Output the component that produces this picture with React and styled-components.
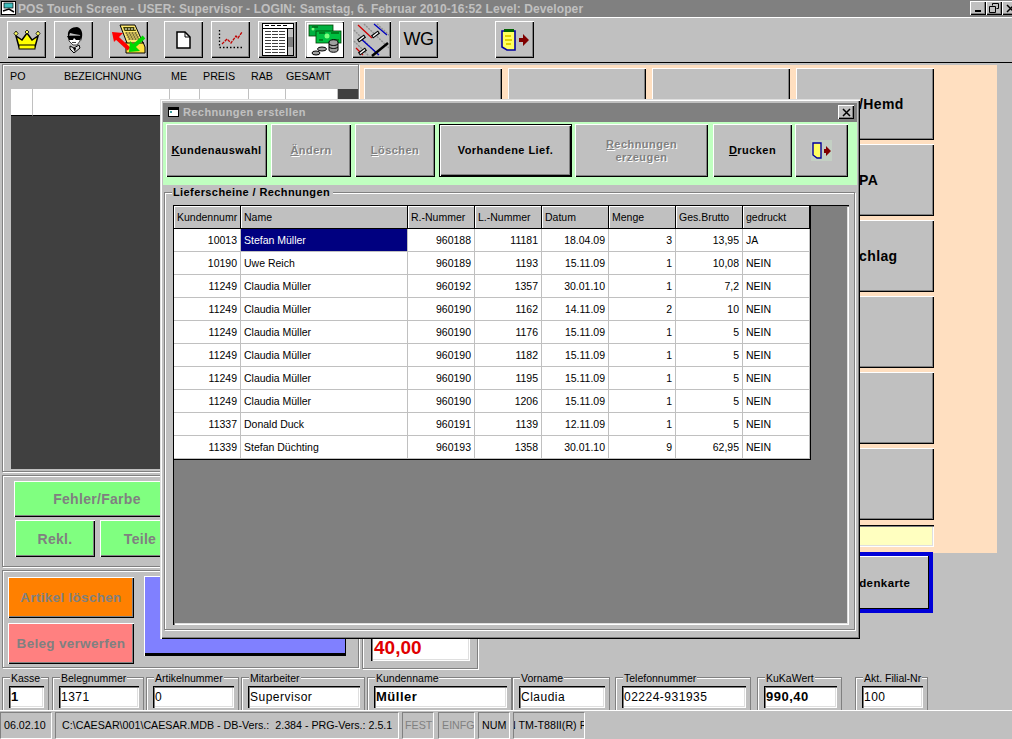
import React from "react";
import styled, { createGlobalStyle, css } from "styled-components";

const GlobalStyle = createGlobalStyle`
  html, body {
    margin: 0;
    padding: 0;
    background: #c0c0c0;
  }
  body {
    font-family: "Liberation Sans", Arial, sans-serif;
    font-size: 11px;
    color: #000;
    overflow: hidden;
  }
`;

const raised = css`
  box-shadow: inset 1px 1px 0 #fff, inset -1px -1px 0 #000, inset -2px -2px 0 #808080;
`;
const sunken = css`
  box-shadow: inset 1px 1px 0 #000, inset 2px 2px 0 #808080, inset -1px -1px 0 #fff, inset -2px -2px 0 #dfdfdf;
`;

const Screen = styled.div`
  position: relative;
  width: 1012px;
  height: 739px;
  overflow: hidden;
  display: flex;
  flex-direction: column;
  background: #c0c0c0;
`;

const TitleBar = styled.div`
  height: 17px;
  flex: none;
  display: flex;
  align-items: center;
  background: #808080;
  border-bottom: 1px solid #fff;
  color: #c0c0c0;
  font-weight: 700;
  font-size: 12px;
  letter-spacing: 0.1px;
  white-space: nowrap;
  padding-left: 18px;
`;

const AppIcon = styled.svg`
  position: absolute;
  left: 1px;
  top: 0;
`;

const WinButtons = styled.div`
  position: absolute;
  right: -6px;
  top: 1px;
  display: flex;
`;

const WinButton = styled.div`
  width: 16px;
  height: 14px;
  background: #c0c0c0;
  ${raised}
  display: flex;
  align-items: center;
  justify-content: center;
`;

const Toolbar = styled.div`
  height: 45px;
  flex: none;
  box-sizing: border-box;
  padding: 3px 0 0 7px;
  display: flex;
  border-bottom: 1px solid #000;
`;

const ToolButton = styled.div`
  width: 39px;
  height: 37px;
  flex: none;
  margin-right: ${(p) => p.$gap ?? 8}px;
  background: #c0c0c0;
  ${raised}
  display: flex;
  align-items: center;
  justify-content: center;
  font-size: 18px;
  letter-spacing: -0.5px;
`;

const Main = styled.div`
  height: 607px;
  flex: none;
  display: flex;
`;

const LeftColumn = styled.div`
  width: 360px;
  flex: none;
  padding: 1px 1px 0 2px;
  box-sizing: border-box;
  display: flex;
  flex-direction: column;
  gap: 3px;
`;

const Groove = styled.div`
  box-sizing: border-box;
  border: 1px solid #808080;
  box-shadow: inset 1px 1px 0 #fff, 1px 1px 0 #fff;
`;

const OrderPanel = styled(Groove)`
  height: 408px;
  flex: none;
`;

const OrderHead = styled.div`
  height: 22px;
  margin-bottom: 2px;
  display: flex;
  align-items: center;
  white-space: nowrap;
  font-size: 10.7px;
`;

const OrderHeadCell = styled.span`
  width: ${(p) => p.$w}px;
  flex: none;
`;

const OrderGrid = styled.div`
  margin-left: 8px;
  height: 380px;
  background: #404040;
`;

const OrderRow = styled.div`
  height: 27px;
  display: flex;
`;

const OrderCell = styled.div`
  height: 27px;
  width: ${(p) => p.$w}px;
  flex: none;
  box-sizing: border-box;
  background: #fff;
  border-right: 1px solid #c0c0c0;
  border-bottom: 1px solid #000;
`;

const ActionGroup = styled(Groove)`
  height: 92px;
  flex: none;
  padding: 5px 0 0 11px;
  display: flex;
  flex-direction: column;
  gap: 3px;
`;

const ActionRow = styled.div`
  display: flex;
  gap: 5px;
  margin-left: 1px;
`;

const ColorButton = styled.div`
  box-sizing: border-box;
  width: ${(p) => p.$w}px;
  height: ${(p) => p.$h}px;
  flex: none;
  background: ${(p) => p.$bg};
  ${raised}
  display: flex;
  align-items: center;
  justify-content: center;
  font-weight: 700;
  font-size: ${(p) => p.$size ?? 14}px;
  letter-spacing: 0.3px;
  color: #808080;
  white-space: nowrap;
`;

const FooterGroup = styled(Groove)`
  height: 98px;
  flex: none;
  padding: 6px 0 0 5px;
  display: flex;
  gap: 10px;
`;

const StackButtons = styled.div`
  display: flex;
  flex-direction: column;
  gap: 5px;
`;

const BigBlue = styled.div`
  width: 202px;
  height: 80px;
  margin-top: -1px;
  background: #8080ff;
  box-shadow: inset 1px 1px 0 #fff, inset -1px -3px 0 #000;
`;

const RightColumn = styled.div`
  flex: 1;
  padding: 2px 15px 0 0;
  display: flex;
  flex-direction: column;
`;

const PeachPanel = styled.div`
  height: 488px;
  flex: none;
  box-sizing: border-box;
  background: #ffdfc0;
  padding: 3px 63px 0 4px;
`;

const KeyGrid = styled.div`
  display: grid;
  grid-template-columns: repeat(4, 138px);
  grid-auto-rows: 72px;
  gap: 4px 6px;
`;

const Key = styled.div`
  box-sizing: border-box;
  background: #c0c0c0;
  ${raised}
  display: flex;
  align-items: center;
  font-weight: 700;
  font-size: 14px;
  letter-spacing: 0.4px;
  padding-left: 63px;
  white-space: nowrap;
`;

const YellowField = styled.div`
  height: 22px;
  margin: 5px 0 0 440px;
  background: #ffffc0;
  ${sunken}
`;

const LowerRow = styled.div`
  display: flex;
`;

const PriceGroup = styled(Groove)`
  width: 116px;
  height: 116px;
  margin-left: 2px;
  flex: none;
  display: flex;
  flex-direction: column;
  justify-content: flex-end;
  padding: 0 7px 7px 8px;
`;

const PriceField = styled.div`
  height: 26px;
  background: #fff;
  ${sunken}
  color: #e00000;
  font-weight: 700;
  font-size: 19px;
  line-height: 26px;
  padding-left: 3px;
`;

const CardButton = styled.div`
  box-sizing: border-box;
  width: 120px;
  height: 61px;
  margin: -1px 0 0 335px;
  border: 4px solid #0000d8;
  background: #c0c0c0;
  box-shadow: inset -1px -1px 0 #000, inset 1px 1px 0 #fff;
  display: flex;
  align-items: center;
  justify-content: center;
  font-weight: 700;
  font-size: 11.5px;
  letter-spacing: 0.4px;
`;

const FieldRow = styled.div`
  height: 40px;
  flex: none;
  padding-left: 2px;
  display: flex;
`;

const Field = styled.div`
  position: relative;
  box-sizing: border-box;
  width: ${(p) => p.$w}px;
  height: 33px;
  margin-left: ${(p) => p.$ml ?? 0}px;
  margin-top: 7px;
  flex: none;
  border: 1px solid #808080;
  border-bottom: 0;
  box-shadow: inset 1px 1px 0 #fff;
  padding: 8px 4px 0 6px;
`;

const Legend = styled.span`
  position: absolute;
  top: -6px;
  left: 7px;
  padding: 0 1px;
  background: #c0c0c0;
  font-size: 10.5px;
  line-height: 13px;
  white-space: nowrap;
`;

const FieldInput = styled.div`
  height: 22px;
  box-sizing: border-box;
  background: #fff;
  ${sunken}
  font-size: ${(p) => (p.$bold ? 13 : 12)}px;
  font-weight: ${(p) => (p.$bold ? 700 : 400)};
  line-height: 22px;
  padding-left: 2px;
  letter-spacing: 0.5px;
  white-space: nowrap;
  overflow: hidden;
`;

const StatusBar = styled.div`
  flex: 1;
  border-top: 1px solid #fff;
  display: flex;
  padding-top: 1px;
`;

const StatusCell = styled.div`
  box-sizing: border-box;
  width: ${(p) => p.$w}px;
  margin-right: ${(p) => p.$gap ?? 3}px;
  flex: none;
  height: 27px;
  line-height: 24px;
  padding-left: ${(p) => p.$pl ?? 3}px;
  text-indent: ${(p) => p.$indent ?? 0}px;
  border: 1px solid;
  border-color: #808080 #fff #fff #808080;
  color: ${(p) => (p.$off ? "#808080" : "#000")};
  font-size: 10.7px;
  white-space: pre;
  overflow: hidden;
`;

/* dialog window floats over the page */
const Dialog = styled.div`
  position: absolute;
  left: 160px;
  top: 99px;
  width: 700px;
  height: 540px;
  box-sizing: border-box;
  background: #c0c0c0;
  padding: 4px 3px 0;
  box-shadow: inset 1px 1px 0 #dfdfdf, inset 2px 2px 0 #fff, inset -1px -1px 0 #000, inset -2px -2px 0 #808080;
  display: flex;
  flex-direction: column;
`;

const DialogTitle = styled.div`
  height: 17px;
  padding: 0 0 2px 4px;
  flex: none;
  background: #808080;
  color: #c0c0c0;
  font-weight: 700;
  font-size: 11px;
  letter-spacing: 0.4px;
  display: flex;
  align-items: center;
  gap: 3px;
  position: relative;
`;

const DialogClose = styled(WinButton)`
  position: absolute;
  right: 3px;
  top: 2px;
`;

const CommandBar = styled.div`
  height: 63px;
  flex: none;
  box-sizing: border-box;
  background: #c0ffc0;
  padding: 2px 0 0 3px;
  display: flex;
`;

const CommandButton = styled.div`
  box-sizing: border-box;
  width: ${(p) => p.$w}px;
  margin-right: ${(p) => p.$gap ?? 4}px;
  height: 53px;
  flex: none;
  background: #c0c0c0;
  ${(p) =>
    p.$focus
      ? css`
          border: 1px solid #000;
          box-shadow: inset 1px 1px 0 #fff, inset -1px -1px 0 #000, inset -2px -2px 0 #808080;
        `
      : raised}
  display: flex;
  align-items: center;
  justify-content: center;
  text-align: center;
  font-weight: 700;
  font-size: 11px;
  line-height: 13px;
  letter-spacing: 0.45px;
  color: ${(p) => (p.$off ? "#808080" : "#000")};
  text-shadow: ${(p) => (p.$off ? "1px 1px 0 #fff" : "none")};
`;

const ListGroup = styled.div`
  position: relative;
  flex: 1;
  margin: 7px 2px 9px 1px;
  border: 1px solid #808080;
  box-shadow: inset 1px 1px 0 #fff, 1px 1px 0 #fff;
  padding: 12px 5px 4px 8px;
  display: flex;
`;

const ListLegend = styled.span`
  position: absolute;
  left: 7px;
  top: -7px;
  padding: 0 3px 0 1px;
  background: #c0c0c0;
  font-weight: 700;
  font-size: 11px;
  line-height: 13px;
  letter-spacing: 0.4px;
`;

const ListArea = styled.div`
  flex: 1;
  background: #808080;
  ${sunken}
  padding: 1px;
`;

const Table = styled.div`
  width: 636px;
  background: #fff;
  border-bottom: 1px solid #000;
  border-right: 1px solid #000;
`;

const TableRow = styled.div`
  display: grid;
  grid-template-columns: 67px 167px repeat(6, 67px);
  height: 23px;
`;

const HeadCell = styled.div`
  box-sizing: border-box;
  background: #c0c0c0;
  border-bottom: 1px solid #000;
  border-right: 1px solid #000;
  box-shadow: inset 1px 1px 0 #fff;
  line-height: 22px;
  padding-left: 3px;
  overflow: hidden;
  white-space: nowrap;
  font-size: 10.5px;
`;

const Cell = styled.div`
  box-sizing: border-box;
  border-bottom: 1px solid #c0c0c0;
  border-right: 1px solid #c0c0c0;
  line-height: 23px;
  padding: 0 3px;
  font-size: 10.5px;
  text-align: ${(p) => (p.$right ? "right" : "left")};
  white-space: nowrap;
  overflow: hidden;
  background: ${(p) => (p.$selected ? "#000080" : "#fff")};
  color: ${(p) => (p.$selected ? "#fff" : "#000")};
`;

const Underline = styled.span`
  text-decoration: underline;
`;

const CrownIcon = () => (
  <svg width="28" height="20" viewBox="0 0 28 20">
    <path d="M6 17 L3 6 L9 10 L14 3 L19 10 L25 6 L22 17 Z" fill="#ffff00" stroke="#000" strokeWidth="1.5" />
    <rect x="6" y="15" width="16" height="4" fill="#ffff00" stroke="#000" />
    <path d="M3 1 L5 3.5 L3 6 L1 3.5 Z M14 0 L16 2 L14 4 L12 2 Z M25 1 L27 3.5 L25 6 L23 3.5 Z" fill="#ffff60" stroke="#000" strokeWidth="0.8" />
  </svg>
);

const AgentIcon = () => (
  <svg width="18" height="26" viewBox="0 0 18 26">
    <path d="M4 9 H15 V14 L12 18 H8 L4 14 Z" fill="#fff" stroke="#404040" />
    <path d="M3 9 C2 3 7 0 12 0 C16 1 18 5 17 10 L16 14 L15 8 L9 7 L5 6 L4 9 Z" fill="#000" />
    <path d="M2 9 H16 V11 L15 13 H11 L9 11 L8 13 H4 L3 11 Z" fill="#000" />
    <path d="M7 15.5 H11" stroke="#404040" />
    <path d="M5 19 L9 21 L14 18 L15 21 L9 26 L5 22 Z" fill="#e0e0e0" stroke="#000" />
    <path d="M8 21 H11 L10 25 Z" fill="#000" />
  </svg>
);

const RegisterIcon = () => (
  <svg width="34" height="31" viewBox="0 0 34 31">
    <path d="M14 18 H31 L33 23 V29 H14 Z" fill="#ffe040" stroke="#000" />
    <path d="M8 1 H23 L31 19 H15 Z" fill="#ffe870" stroke="#000" />
    <path d="M11 3 H22 L24 7 H12.5 Z" fill="#404000" />
    <path d="M13 5 H23" stroke="#fff" strokeDasharray="2 1" />
    <path d="M13.5 9 H25 M14.5 11 H26 M15.5 13 H27 M16.5 15 H28" stroke="#000" strokeDasharray="2 1" />
    <path d="M17 25 L5 14" stroke="#ff0000" strokeWidth="4" />
    <path d="M0 8 L11 9 L2 18 Z" fill="#ff0000" />
    <path d="M32 13 L22 22" stroke="#00d800" strokeWidth="4" />
    <path d="M17 28 L28 27 L18 17 Z" fill="#00d800" />
  </svg>
);

const DocIcon = () => (
  <svg width="15" height="18" viewBox="0 0 15 18">
    <path d="M1 1 H9 L14 6 V17 H1 Z" fill="#fff" stroke="#000" strokeWidth="1.5" />
    <path d="M9 1 V6 H14" fill="none" stroke="#000" />
  </svg>
);

const ChartIcon = () => (
  <svg width="25" height="19" viewBox="0 0 25 19">
    <path d="M1.5 0 V17.5 H25" fill="none" stroke="#000" strokeDasharray="1.5 2" strokeWidth="1.3" />
    <path d="M4 14 L9 9 L13 13 L18 6 L20 8 L24 2" fill="none" stroke="#c00000" strokeWidth="1.3" strokeDasharray="3 1" />
  </svg>
);

const TableIcon = () => (
  <svg width="32" height="33" viewBox="0 0 32 33" shapeRendering="crispEdges">
    <rect x="0.5" y="0.5" width="31" height="32" fill="#fff" stroke="#000" strokeWidth="1.5" />
    <rect x="0.5" y="0.5" width="31" height="5" fill="#fff" stroke="#000" />
    <path d="M3 8.5 H23 M3 11.5 H23 M3 14.5 H23 M3 17.5 H23 M3 20.5 H23 M3 23.5 H23 M3 26.5 H23 M3 29.5 H23" stroke="#404040" strokeDasharray="6 1" />
    <path d="M3 2.5 H25" stroke="#000" strokeDasharray="4 2" />
    <rect x="25.5" y="5.5" width="6" height="27" fill="#c0c0c0" stroke="#000" />
    <rect x="26" y="14" width="5" height="10" fill="#808080" />
  </svg>
);

const MoneyIcon = () => (
  <svg width="36" height="34" viewBox="0 0 36 34">
    <rect width="36" height="34" fill="#fff" />
    <rect x="2" y="2" width="24" height="11" fill="#00b040" stroke="#004000" strokeWidth="0.8" />
    <rect x="9" y="8" width="25" height="12" fill="#00c040" stroke="#004000" strokeWidth="0.8" />
    <circle cx="6" cy="6" r="1.5" fill="#80ff80" />
    <circle cx="20" cy="13" r="2.5" fill="#80ff80" />
    <path d="M5 4 H11 M12 10 H18 M24 10 H32 M25 17 H32 M12 17 H16" stroke="#004000" />
    <path d="M22 19 C22 16 31 16 31 19 V27 C31 30 22 30 22 27 Z" fill="#a0a0a0" stroke="#000" />
    <path d="M22 21 C24 23 29 23 31 21 M22 24 C24 26 29 26 31 24" fill="none" stroke="#000" />
    <ellipse cx="15" cy="26" rx="4.5" ry="2" fill="#a0a0a0" stroke="#000" />
    <ellipse cx="9" cy="30" rx="4" ry="2" fill="#a0a0a0" stroke="#000" />
  </svg>
);

const SliderIcon = () => (
  <svg width="38" height="36" viewBox="0 0 38 36">
    <path d="M1 8 L26 34 M1 19 L16 34 M11 2 L36 26 M24 2 L37 14" stroke="#909090" strokeWidth="1.4" strokeDasharray="2 1" />
    <path d="M5 3 L19 16 M3 26 L10 33" stroke="#d00000" strokeWidth="1.3" />
    <path d="M21 2 L34 13 M7 16 L26 33" stroke="#0000c0" strokeWidth="1.3" />
    <path d="M35 21 L19 34" stroke="#000" strokeWidth="2.5" />
    <path d="M19 15 L26 10 M5 19 L12 14 M6 32 L13 27" stroke="#000" strokeWidth="3.5" />
    <path d="M20 14.5 L25 10.5 M6 18.5 L11 14.5 M7 31.5 L12 27.5" stroke="#fff" strokeWidth="1.6" />
  </svg>
);

const ExitIcon = () => (
  <svg width="28" height="22" viewBox="0 0 28 22">
    <path d="M1 2 H14 V21 H6 L1 18 Z" fill="#ffff60" stroke="#0000a0" strokeWidth="1.6" />
    <rect x="3" y="0" width="10" height="3" fill="#006000" />
    <path d="M4 7 H10 M4 11 H11 M5 15 H10" stroke="#e0d000" strokeWidth="2" />
    <path d="M18 9 H22 V5 L28 11 L22 17 V13 H18 Z" fill="#800000" />
  </svg>
);

const SmallExitIcon = () => (
  <svg width="21" height="21" viewBox="0 0 21 21">
    <rect width="21" height="21" fill="#c4d0c4" />
    <path d="M2 3 H10 V18 H6 L2 15 Z" fill="#ffff60" stroke="#0000a0" strokeWidth="1.4" />
    <path d="M13 9 H15 V6 L20 11 L15 16 V13 H13 Z" fill="#800000" />
  </svg>
);

const rows = [
  ["10013", "Stefan Müller", "960188", "11181", "18.04.09", "3", "13,95", "JA"],
  ["10190", "Uwe Reich", "960189", "1193", "15.11.09", "1", "10,08", "NEIN"],
  ["11249", "Claudia Müller", "960192", "1357", "30.01.10", "1", "7,2", "NEIN"],
  ["11249", "Claudia Müller", "960190", "1162", "14.11.09", "2", "10", "NEIN"],
  ["11249", "Claudia Müller", "960190", "1176", "15.11.09", "1", "5", "NEIN"],
  ["11249", "Claudia Müller", "960190", "1182", "15.11.09", "1", "5", "NEIN"],
  ["11249", "Claudia Müller", "960190", "1195", "15.11.09", "1", "5", "NEIN"],
  ["11249", "Claudia Müller", "960190", "1206", "15.11.09", "1", "5", "NEIN"],
  ["11337", "Donald Duck", "960191", "1139", "12.11.09", "1", "5", "NEIN"],
  ["11339", "Stefan Düchting", "960193", "1358", "30.01.10", "9", "62,95", "NEIN"],
];

const headers = ["Kundennumr", "Name", "R.-Nummer", "L.-Nummer", "Datum", "Menge", "Ges.Brutto", "gedruckt"];

const keys = [
  "", "", "", "/Hemd",
  "", "", "", "PA",
  "", "", "", "chlag",
  "", "", "", "",
  "", "", "", "",
  "", "", "", "",
];

const fields = [
  { label: "Kasse", w: 47, value: "1", bold: true },
  { label: "Belegnummer", w: 92, ml: 3, value: "1371" },
  { label: "Artikelnummer", w: 93, ml: 2, value: "0" },
  { label: "Mitarbeiter", w: 124, ml: 2, value: "Supervisor" },
  { label: "Kundenname", w: 145, ml: 2, value: "Müller", bold: true },
  { label: "Vorname", w: 98, value: "Claudia" },
  { label: "Telefonnummer", w: 136, ml: 5, value: "02224-931935" },
  { label: "KuKaWert", w: 85, ml: 6, value: "990,40", bold: true },
  { label: "Akt. Filial-Nr", w: 73, ml: 13, value: "100" },
];

export default function App() {
  return (
    <Screen>
      <GlobalStyle />
      <TitleBar>POS Touch Screen - USER: Supervisor - LOGIN: Samstag, 6. Februar 2010-16:52 Level: Developer</TitleBar>
      <AppIcon width="16" height="16" viewBox="0 0 16 16">
        <rect x="0.5" y="1.5" width="14" height="13" fill="#fff" stroke="#000" />
        <rect x="3" y="3" width="9" height="5" fill="#40c0c0" stroke="#000" strokeWidth="0.7" />
        <path d="M2 11 L8 9 L13 12" fill="none" stroke="#000" strokeWidth="1.5" />
      </AppIcon>
      <WinButtons>
        <WinButton>
          <svg width="8" height="8"><rect x="1" y="6" width="6" height="2" /></svg>
        </WinButton>
        <WinButton>
          <svg width="10" height="10" fill="none" stroke="#000"><path d="M3.5 2.5 V0.5 H9.5 V5.5 H7.5 M0.5 3.5 H6.5 V9.5 H0.5 Z" /></svg>
        </WinButton>
        <WinButton>
          <svg width="9" height="9" stroke="#000" strokeWidth="1.5"><path d="M1 1 L8 8 M8 1 L1 8" /></svg>
        </WinButton>
      </WinButtons>

      <Toolbar>
        <ToolButton><CrownIcon /></ToolButton>
        <ToolButton $gap={16}><AgentIcon /></ToolButton>
        <ToolButton $gap={16}><RegisterIcon /></ToolButton>
        <ToolButton><DocIcon /></ToolButton>
        <ToolButton><ChartIcon /></ToolButton>
        <ToolButton><TableIcon /></ToolButton>
        <ToolButton><MoneyIcon /></ToolButton>
        <ToolButton><SliderIcon /></ToolButton>
        <ToolButton $gap={57}>WG</ToolButton>
        <ToolButton><ExitIcon /></ToolButton>
      </Toolbar>

      <Main>
        <LeftColumn>
          <OrderPanel>
            <OrderHead>
              <OrderHeadCell $w={7} />
              <OrderHeadCell $w={54}>PO</OrderHeadCell>
              <OrderHeadCell $w={107}>BEZEICHNUNG</OrderHeadCell>
              <OrderHeadCell $w={32}>ME</OrderHeadCell>
              <OrderHeadCell $w={48}>PREIS</OrderHeadCell>
              <OrderHeadCell $w={35}>RAB</OrderHeadCell>
              <OrderHeadCell $w={50}>GESAMT</OrderHeadCell>
            </OrderHead>
            <OrderGrid>
              <OrderRow>
                <OrderCell $w={22} />
                <OrderCell $w={137} />
                <OrderCell $w={30} />
                <OrderCell $w={49} />
                <OrderCell $w={37} />
                <OrderCell $w={52} />
              </OrderRow>
            </OrderGrid>
          </OrderPanel>
          <ActionGroup>
            <ColorButton $w={166} $h={36} $bg="#80ff80">Fehler/Farbe</ColorButton>
            <ActionRow>
              <ColorButton $w={80} $h={37} $bg="#80ff80">Rekl.</ColorButton>
              <ColorButton $w={80} $h={37} $bg="#80ff80">Teile</ColorButton>
            </ActionRow>
          </ActionGroup>
          <FooterGroup>
            <StackButtons>
              <ColorButton $w={126} $h={41} $size={13.5} $bg="#ff8000">Artikel löschen</ColorButton>
              <ColorButton $w={126} $h={41} $size={13.5} $bg="#ff8080">Beleg verwerfen</ColorButton>
            </StackButtons>
            <BigBlue />
          </FooterGroup>
        </LeftColumn>

        <RightColumn>
          <PeachPanel>
            <KeyGrid>
              {keys.map((k, i) => (
                <Key key={i}>{k}</Key>
              ))}
            </KeyGrid>
            <YellowField />
          </PeachPanel>
          <LowerRow>
            <PriceGroup>
              <PriceField>40,00</PriceField>
            </PriceGroup>
            <CardButton>Kundenkarte</CardButton>
          </LowerRow>
        </RightColumn>
      </Main>

      <FieldRow>
        {fields.map((f) => (
          <Field key={f.label} $w={f.w} $ml={f.ml}>
            <Legend>{f.label}</Legend>
            <FieldInput $bold={f.bold}>{f.value}</FieldInput>
          </Field>
        ))}
      </FieldRow>

      <StatusBar>
        <StatusCell $w={52}>06.02.10</StatusCell>
        <StatusCell $w={344} $pl={6}>C:\CAESAR\001\CAESAR.MDB - DB-Vers.:  2.384 - PRG-Vers.: 2.5.1</StatusCell>
        <StatusCell $w={32} $gap={4} $off $pl={2}>FEST</StatusCell>
        <StatusCell $w={37} $off $pl={3}>EINFG</StatusCell>
        <StatusCell $w={32} $pl={3}>NUM</StatusCell>
        <StatusCell $w={72} $pl={0} $indent={-6}>N TM-T88II(R) Receipt</StatusCell>
      </StatusBar>

      <Dialog>
        <DialogTitle>
          <svg width="13" height="13" viewBox="0 0 13 13">
            <rect x="1.5" y="2.5" width="10" height="9" fill="#fff" stroke="#000" />
            <rect x="1" y="2" width="11" height="3" fill="#000" />
            <rect x="3" y="6" width="2" height="2" fill="#40a0a0" />
          </svg>
          Rechnungen erstellen
          <DialogClose>
            <svg width="9" height="9" stroke="#000" strokeWidth="1.5"><path d="M1 1 L8 8 M8 1 L1 8" /></svg>
          </DialogClose>
        </DialogTitle>
        <CommandBar>
          <CommandButton $w={101}><span><Underline>K</Underline>undenauswahl</span></CommandButton>
          <CommandButton $w={80} $off><span><Underline>Ä</Underline>ndern</span></CommandButton>
          <CommandButton $w={80} $off><span><Underline>L</Underline>öschen</span></CommandButton>
          <CommandButton $w={133} $gap={3} $focus>Vorhandene Lief.</CommandButton>
          <CommandButton $w={133} $gap={5} $off><span><Underline>R</Underline>echnungen<br />erzeugen</span></CommandButton>
          <CommandButton $w={79} $gap={3}><span><Underline>D</Underline>rucken</span></CommandButton>
          <CommandButton $w={53}><SmallExitIcon /></CommandButton>
        </CommandBar>
        <ListGroup>
          <ListLegend>Lieferscheine / Rechnungen</ListLegend>
          <ListArea>
            <Table>
              <TableRow>
                {headers.map((h) => <HeadCell key={h}>{h}</HeadCell>)}
              </TableRow>
              {rows.map((r, i) => (
                <TableRow key={i}>
                  {r.map((c, j) => (
                    <Cell key={j} $right={j !== 1 && j !== 7} $selected={i === 0 && j === 1}>
                      {c}
                    </Cell>
                  ))}
                </TableRow>
              ))}
            </Table>
          </ListArea>
        </ListGroup>
      </Dialog>
    </Screen>
  );
}
